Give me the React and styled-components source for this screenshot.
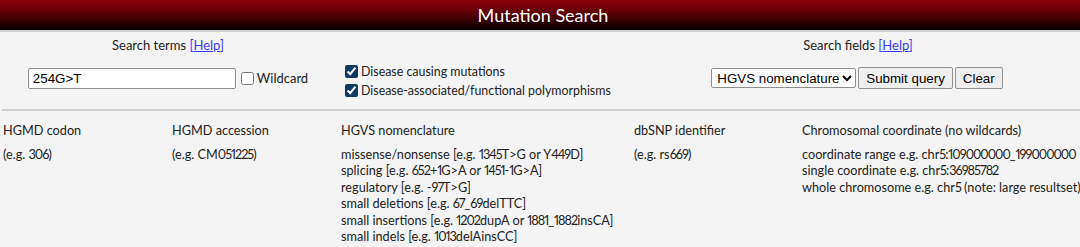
import React from "react";
import styled, { createGlobalStyle } from "styled-components";

const Global = createGlobalStyle`
  html, body { margin: 0; padding: 0; background: #f4f4f4; }
  body {
    font-family: Lato, "Noto Sans", sans-serif;
    font-size: 13px;
    color: #222;
    font-variant-numeric: proportional-nums;
  }
`;

const Header = styled.header`
  height: 30px;
  background: linear-gradient(#8c0008 0%, #5a0005 45%, #000 100%);
  border-bottom: 2px solid #cfcfcf;
  display: flex;
  align-items: center;
  justify-content: center;
`;

const Title = styled.h1`
  margin: 0;
  color: #fff;
  font-family: Lato, "Noto Sans", sans-serif;
  font-weight: 400;
  font-size: 18px;
  padding-left: 6px;
`;

const FormGrid = styled.form`
  display: grid;
  grid-template-columns: 336px 300px 1fr;
  grid-template-rows: 26px 40px;
  padding-bottom: 11px;
`;

const FieldLabel = styled.div`
  text-align: center;
  align-self: center;
  grid-column: ${(p) => p.col};
`;

const Help = styled.span`
  color: #3b3bff;
  a { color: inherit; text-decoration: underline; }
`;

const Controls = styled.div`
  grid-column: ${(p) => p.col};
  grid-row: 2;
  display: flex;
  align-items: center;
  justify-content: ${(p) => p.justify || "center"};
`;

const TextInput = styled.input`
  width: 208px;
  height: 21px;
  box-sizing: border-box;
  border: 1px solid #8f8f8f;
  border-radius: 2px;
  background: #fff;
  font-family: "Liberation Sans", Arial, sans-serif;
  font-size: 13.33px;
  padding: 1px 4px;
  margin: 0;
`;

const CheckLabel = styled.label`
  display: flex;
  align-items: center;
  height: 19px;
  font-size: ${(p) => p.size || 13}px;
  white-space: nowrap;
`;

const Box = styled.input`
  width: 13px;
  height: 13px;
  margin: 0 3px 0 ${(p) => p.ml || 0}px;
  accent-color: #0d3a63;
`;

const CheckStack = styled.div`
  display: flex;
  flex-direction: column;
  padding-left: 9px;
  padding-top: 5px;
`;

const Select = styled.select`
  width: 145px;
  height: 20px;
  font-family: "Liberation Sans", Arial, sans-serif;
  font-size: 13.33px;
  border: 1px solid #8f8f8f;
  border-radius: 2px;
  background: #fff;
  color: #000;
  margin: 0 2px 0 0;
  padding: 0 0 0 1px;
`;

const Button = styled.button`
  height: 22px;
  font-family: "Liberation Sans", Arial, sans-serif;
  font-size: 13.33px;
  background: #efefef;
  border: 1px solid #8f8f8f;
  border-radius: 2px;
  color: #000;
  padding: 1px 7px;
  margin: 0 2px 0 0;
`;

const Rule = styled.hr`
  margin: 0 0 0 2px;
  border: none;
  border-top: 2px solid #d2d2d2;
`;

const Examples = styled.div`
  display: grid;
  grid-template-columns: 169px 169px 293px 168px 1fr;
  padding: 11px 0 0 3px;
  row-gap: 7px;
  line-height: 16.5px;
  font-size: 12.7px;
`;

const Cell = styled.div`
  white-space: nowrap;
`;

const Num = styled.span`
  letter-spacing: -1px;
`;

const withNums = (s) =>
  s.split(/(\d+)/).map((part, i) =>
    /^\d+$/.test(part) ? <Num key={i}>{part}</Num> : part
  );

const columns = [
  { head: "HGMD codon", lines: ["(e.g. 306)"] },
  { head: "HGMD accession", lines: ["(e.g. CM051225)"] },
  {
    head: "HGVS nomenclature",
    lines: [
      "missense/nonsense [e.g. 1345T>G or Y449D]",
      "splicing [e.g. 652+1G>A or 1451-1G>A]",
      "regulatory [e.g. -97T>G]",
      "small deletions [e.g. 67_69delTTC]",
      "small insertions [e.g. 1202dupA or 1881_1882insCA]",
      "small indels [e.g. 1013delAinsCC]",
    ],
  },
  { head: "dbSNP identifier", lines: ["(e.g. rs669)"] },
  {
    head: "Chromosomal coordinate (no wildcards)",
    lines: [
      "coordinate range e.g. chr5:109000000_199000000",
      "single coordinate e.g. chr5:36985782",
      "whole chromosome e.g. chr5 (note: large resultset)",
    ],
  },
];

export default function App() {
  return (
    <>
      <Global />
      <Header>
        <Title>Mutation Search</Title>
      </Header>
      <FormGrid onSubmit={(e) => e.preventDefault()}>
        <FieldLabel col={1}>
          Search terms <Help>[<a href="#">Help</a>]</Help>
        </FieldLabel>
        <FieldLabel col={3}>
          Search fields <Help>[<a href="#">Help</a>]</Help>
        </FieldLabel>
        <Controls col={1}>
          <TextInput defaultValue="254G>T" />
          <CheckLabel>
            <Box type="checkbox" ml={5} />
            Wildcard
          </CheckLabel>
        </Controls>
        <Controls col={2} justify="flex-start">
          <CheckStack>
            <CheckLabel size={12.4}>
              <Box type="checkbox" defaultChecked />
              Disease causing mutations
            </CheckLabel>
            <CheckLabel size={12.4}>
              <Box type="checkbox" defaultChecked />
              Disease-associated/functional polymorphisms
            </CheckLabel>
          </CheckStack>
        </Controls>
        <Controls col={3}>
          <Select defaultValue="hgvs">
            <option value="hgvs">HGVS nomenclature</option>
            <option value="codon">HGMD codon</option>
            <option value="acc">HGMD accession</option>
            <option value="dbsnp">dbSNP identifier</option>
            <option value="coord">Chromosomal coordinate</option>
          </Select>
          <Button type="submit">Submit query</Button>
          <Button type="reset">Clear</Button>
        </Controls>
      </FormGrid>
      <Rule />
      <Examples>
        {columns.map((c) => (
          <Cell key={c.head}>{c.head}</Cell>
        ))}
        {columns.map((c) => (
          <Cell key={c.head + "-ex"}>
            {c.lines.map((l) => (
              <div key={l}>{withNums(l)}</div>
            ))}
          </Cell>
        ))}
      </Examples>
    </>
  );
}
